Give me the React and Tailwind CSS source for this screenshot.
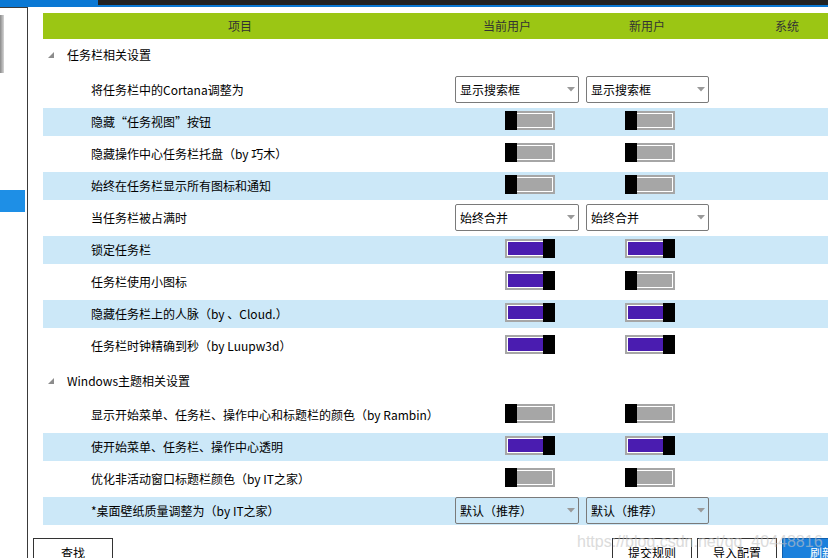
import React from "react";

const ROW_BLUE = "bg-[#cce8f8]";

function Toggle({ on }) {
  return (
    <div className="relative w-[50px] h-[19px] bg-[#a6a6a6] p-[2px] shrink-0">
      <div className={"w-full h-full border border-white " + (on ? "bg-[#4a1cb0]" : "bg-[#a6a6a6]")} />
      <div className={"absolute top-0 h-[19px] w-[12px] bg-black " + (on ? "right-0" : "left-0")} />
    </div>
  );
}

function Dropdown({ text, w }) {
  return (
    <div className={"h-[27px] border border-[#7a7a7a] rounded-[2px] flex items-center pl-[4px] pr-[3px] shrink-0 " + w}>
      <span className="text-[12px] text-black leading-none">{text}</span>
      <svg className="ml-auto" width="8" height="5" viewBox="0 0 8 5">
        <polygon points="0,0 8,0 4,4.5" fill="#9a9a9a" />
      </svg>
    </div>
  );
}

function Row({ label, blue, a, b }) {
  const cell = (v, which) => {
    if (v && v.dd) {
      return <Dropdown text={v.dd} w={which === 1 ? "w-[124px]" : "w-[123px]"} />;
    }
    return (
      <div className={"self-start mt-[3px] " + (which === 1 ? "ml-[50px]" : "ml-[39px]")}>
        <Toggle on={v} />
      </div>
    );
  };
  return (
    <div className="h-[32px] py-[2px] shrink-0">
      <div className={"h-full flex items-center " + (blue ? ROW_BLUE : "")}>
        <div className="w-[412px] shrink-0 pl-[48px] text-[12px] text-black leading-none whitespace-nowrap">{label}</div>
        <div className="w-[131px] shrink-0 h-full flex items-start">{cell(a, 1)}</div>
        <div className="w-[123px] shrink-0 h-full flex items-start">{cell(b, 2)}</div>
      </div>
    </div>
  );
}

function GroupHeader({ text, cls }) {
  return (
    <div className={"h-[26px] shrink-0 flex items-center " + cls}>
      <div className="pl-[5px] w-[24px] shrink-0 flex items-center">
        <svg width="6" height="6" viewBox="0 0 6 6">
          <polygon points="6,0 6,6 0,6" fill="#8c8c8c" />
        </svg>
      </div>
      <span className="text-[12px] text-black leading-none">{text}</span>
    </div>
  );
}

function Btn({ children, cls }) {
  return (
    <div className={"h-[30px] w-[80px] shrink-0 border flex items-center justify-center text-[12px] leading-none " + cls}>
      {children}
    </div>
  );
}

export default function App() {
  const g1 = [
    { label: "将任务栏中的Cortana调整为", a: { dd: "显示搜索框" }, b: { dd: "显示搜索框" } },
    { label: "隐藏“任务视图”按钮", blue: true, a: false, b: false },
    { label: "隐藏操作中心任务栏托盘（by 巧木）", a: false, b: false },
    { label: "始终在任务栏显示所有图标和通知", blue: true, a: false, b: false },
    { label: "当任务栏被占满时", a: { dd: "始终合并" }, b: { dd: "始终合并" } },
    { label: "锁定任务栏", blue: true, a: true, b: true },
    { label: "任务栏使用小图标", a: true, b: false },
    { label: "隐藏任务栏上的人脉（by 、Cloud.）", blue: true, a: true, b: true },
    { label: "任务栏时钟精确到秒（by Luupw3d）", a: true, b: true },
  ];
  const g2 = [
    { label: "显示开始菜单、任务栏、操作中心和标题栏的颜色（by Rambin）", a: false, b: false },
    { label: "使开始菜单、任务栏、操作中心透明", blue: true, a: true, b: true },
    { label: "优化非活动窗口标题栏颜色（by IT之家）", a: false, b: false },
    { label: "*桌面壁纸质量调整为（by IT之家）", blue: true, a: { dd: "默认（推荐）" }, b: { dd: "默认（推荐）" } },
  ];

  return (
    <div className="relative w-[828px] h-[558px] overflow-hidden bg-white font-['Noto_Sans_CJK_SC',sans-serif] text-black">
      {/* top bar */}
      <div className="flex h-[5px]">
        <div className="w-[98px] bg-[#0a78d4]" />
        <div className="flex-1 bg-[#222222]" />
      </div>
      <div className="h-[2px] bg-[#0a78d4]" />

      <div className="flex h-[551px] overflow-hidden">
        {/* left panel */}
        <div className="w-[28px] shrink-0 border-t border-r border-[#3a3a3a] flex flex-col">
          <div className="mt-[7px] h-[58px] w-[4px] shrink-0 bg-gradient-to-r from-[#8a8a8a] to-[#d6d6d6]" />
          <div className="mt-[117px] h-[22px] w-[25px] shrink-0 bg-[#1e8fe6]" />
        </div>

        {/* main */}
        <div className="flex-1 flex flex-col min-w-0">
          <div className="ml-[15px] mt-[6px] h-[26px] shrink-0 bg-[#9bc614] flex items-center overflow-hidden text-[12px] text-[#333] leading-none whitespace-nowrap">
            <div className="w-[394px] shrink-0 text-center">项目</div>
            <div className="w-[140px] shrink-0 text-center">当前用户</div>
            <div className="w-[140px] shrink-0 text-center">新用户</div>
            <div className="w-[140px] shrink-0 text-center">系统</div>
          </div>

          <div className="ml-[15px] shrink-0 flex flex-col">
            <GroupHeader text="任务栏相关设置" cls="mt-[3px] mb-[6px]" />
            {g1.map((r, i) => (
              <Row key={i} {...r} />
            ))}
            <GroupHeader text="Windows主题相关设置" cls="mt-[6px] mb-[5px]" />
            {g2.map((r, i) => (
              <Row key={i} {...r} />
            ))}
          </div>

          <div className="mt-[11px] shrink-0 flex whitespace-nowrap">
            <Btn cls="ml-[5px] border-[#333] bg-white">查找</Btn>
            <Btn cls="ml-[499px] border-[#333] bg-white">提交规则</Btn>
            <Btn cls="ml-[5px] border-[#333] bg-white">导入配置</Btn>
            <Btn cls="ml-[5px] border-[#0f5fae] bg-[#1b80dc] text-white">刷新</Btn>
          </div>
        </div>
      </div>

      {/* watermark */}
      <div className="absolute left-[577px] top-[530px] text-[16px] font-['Liberation_Sans',sans-serif] text-[#c4c4c4] opacity-60 whitespace-nowrap pointer-events-none">
        https://blog.csdn.net/qq_40448816
      </div>
    </div>
  );
}
